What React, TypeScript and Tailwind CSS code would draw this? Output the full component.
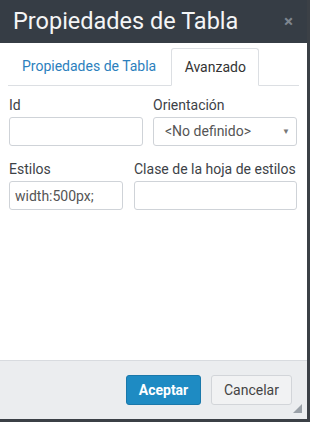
export default function App() {
  return (
    <div className="w-[310px] h-[422px] bg-[#3b4046] font-['Roboto',sans-serif] overflow-hidden">
      <div className="w-[307px] h-[419px] bg-white flex flex-col relative">
        {/* Cabecera */}
        <div className="h-[43px] bg-[#363d45] flex items-center justify-between pl-[13px] pr-[14px] shrink-0">
          <h1 className="text-[23.5px] text-[#f4f5f6] leading-none">Propiedades de Tabla</h1>
          <span className="text-[#7e868f] text-[17px] font-bold leading-none">×</span>
        </div>

        {/* Pestañas */}
        <div className="mx-[8px] mt-[5px] flex items-end border-b border-[#dcdfe3] h-[38px] shrink-0">
          <div className="px-[14px] h-full flex items-center text-[14px] text-[#2c7fbd]">Propiedades de Tabla</div>
          <div className="ml-[1px] px-[14px] h-[38px] -mb-px flex items-center text-[14px] text-[#333] bg-white border border-[#dcdfe3] border-b-white rounded-t-[3px] w-[88px] justify-center">
            Avanzado
          </div>
        </div>

        {/* Formulario */}
        <div className="px-[9px] pt-[11px] flex-1">
          <div className="flex gap-[10px]">
            <div className="w-[134px]">
              <label className="block text-[14px] text-[#3d4247] leading-[17px] mb-[3px]">Id</label>
              <input className="w-full h-[29px] border border-[#cfd3d8] rounded-[3px] outline-none px-2" />
            </div>
            <div className="w-[144px]">
              <label className="block text-[14px] text-[#3d4247] leading-[17px] mb-[3px]">Orientación</label>
              <div className="w-full h-[29px] border border-[#cfd3d8] rounded-[3px] flex items-center justify-between pl-[11px] pr-[6px] text-[14px] text-[#555]">
                <span>&lt;No definido&gt;</span>
                <span className="text-[8px] text-[#777]">▼</span>
              </div>
            </div>
          </div>

          <div className="flex gap-[11px] mt-[15px]">
            <div className="w-[114px]">
              <label className="block text-[14px] text-[#3d4247] leading-[17px] mb-[3px]">Estilos</label>
              <input
                defaultValue="width:500px;"
                className="w-full h-[29px] border border-[#cfd3d8] rounded-[3px] outline-none px-[5px] text-[14px] text-[#555]"
              />
            </div>
            <div className="w-[163px]">
              <label className="block text-[14px] text-[#3d4247] leading-[17px] mb-[3px] whitespace-nowrap">Clase de la hoja de estilos</label>
              <input className="w-full h-[29px] border border-[#cfd3d8] rounded-[3px] outline-none px-2" />
            </div>
          </div>
        </div>

        {/* Pie */}
        <div className="h-[59px] bg-[#ebedef] border-t border-[#d8dbdf] flex items-center justify-end gap-[10px] pr-[15px] shrink-0">
          <button className="w-[75px] h-[30px] bg-[#1e8bc3] border border-[#1a78aa] rounded-[3px] text-white text-[14px] font-bold">
            Aceptar
          </button>
          <button className="w-[81px] h-[30px] bg-[#f1f2f3] border border-[#d2d5d9] rounded-[3px] text-[#444] text-[14px]">
            Cancelar
          </button>
          <svg className="absolute right-[5px] bottom-[6px]" width="9" height="9" viewBox="0 0 9 9">
            <polygon points="9,0 9,9 0,9" fill="#9aa1a8" />
          </svg>
        </div>
      </div>
    </div>
  );
}
